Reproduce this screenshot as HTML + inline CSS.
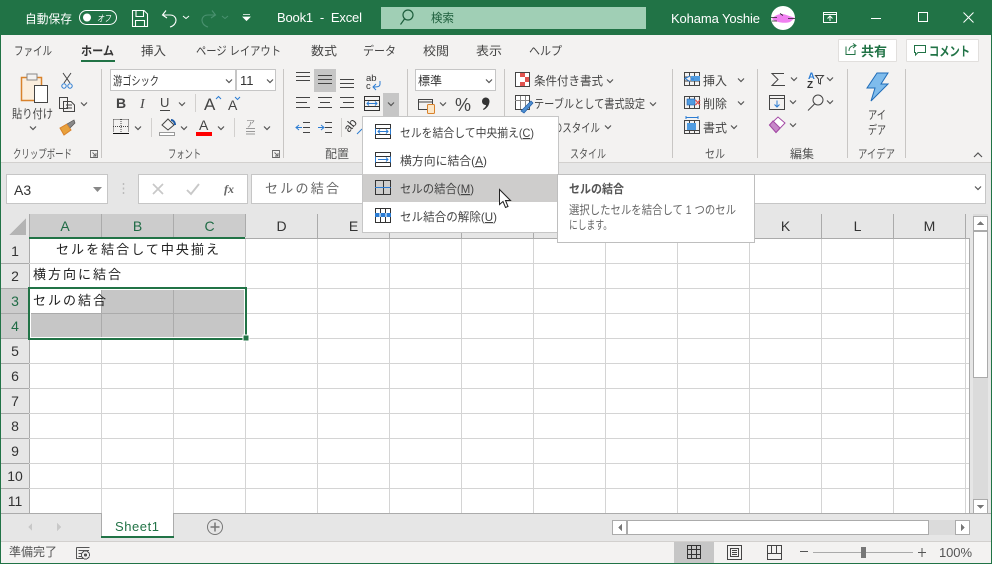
<!DOCTYPE html>
<html><head><meta charset="utf-8"><style>
html,body{margin:0;padding:0;background:#e6e6e6;overflow:hidden}
svg{display:block;font-family:"Liberation Sans","Noto Sans CJK JP",sans-serif;font-size:12px}
text{fill:#444;white-space:pre}
.cr{shape-rendering:crispEdges}
.cell{fill:#222;font-size:13px}
.hd{fill:#333;font-size:14px;text-anchor:middle}
.hs{fill:#1f6b45;font-size:14px;text-anchor:middle}
.rh{fill:#333;font-size:14px;text-anchor:middle}
</style></head><body>
<svg width="992" height="564" viewBox="0 0 992 564" xmlns="http://www.w3.org/2000/svg">
<defs>
<path id="c" d="M-3-1.5L0 1.5L3-1.5" fill="none" stroke="#555" stroke-width="1.2"/>
<path id="al" d="M0 .5H14M0 4.500H14M0 8.500H14" fill="none" stroke="#444" shape-rendering="crispEdges"/>
</defs>

<g class="cr">
<rect width="992" height="564" fill="#e6e6e6"/>
<rect width="992" height="35" fill="#217346"/>
<rect y="35" width="992" height="127" fill="#f3f2f1"/>
<rect y="162" width="992" height="1" fill="#d2d0ce"/>
<rect x="381" y="7" width="265" height="22" fill="#a0cfb5"/>
<rect y="542" width="992" height="21" fill="#f3f2f1"/>
<rect y="541" width="992" height="1" fill="#d2d0ce"/>

<!-- formula bar -->
<rect x="6.500" y="174.500" width="101" height="29" fill="#fff" stroke="#c6c6c6"/>
<rect x="138.500" y="174.500" width="109" height="29" fill="#fff" stroke="#c6c6c6"/>
<rect x="251.500" y="174.500" width="734" height="29" fill="#fff" stroke="#c6c6c6"/>

<!-- grid -->
<rect x="29" y="238" width="940" height="275" fill="#fff"/>
<rect x="29" y="214" width="216" height="24" fill="#cccccc"/>
<rect x="0" y="288" width="29" height="50" fill="#cccccc"/>
<path d="M101.500 214V237M173.500 214V237M245.500 214V237M317.500 214V238M389.500 214V238M461.500 214V238M533.500 214V238M605.500 214V238M677.500 214V238M749.500 214V238M821.500 214V238M893.500 214V238M965.500 214V238M29.500 214V513" stroke="#ababab" fill="none"/>
<path d="M0 263.500H29M0 288.500H29M0 313.500H29M0 338.500H29M0 363.500H29M0 388.500H29M0 413.500H29M0 438.500H29M0 463.500H29M0 488.500H29" stroke="#ababab" fill="none"/>
<path d="M29 263.500H969M29 288.500H969M29 313.500H969M29 338.500H969M29 363.500H969M29 388.500H969M29 413.500H969M29 438.500H969M29 463.500H969M29 488.500H969" stroke="#d4d4d4" fill="none"/>
<path d="M101.500 338V513M173.500 338V513M245.500 238V513M317.500 238V513M389.500 238V513M461.500 238V513M533.500 238V513M605.500 238V513M677.500 238V513M749.500 238V513M821.500 238V513M893.500 238V513M965.500 238V513" stroke="#d4d4d4" fill="none"/>
<path d="M245 238.500H969M969.500 238V513" stroke="#ababab" fill="none"/>
<rect x="29" y="237" width="216" height="2" fill="#217346"/>
<!-- selection -->
<rect x="30" y="289" width="215" height="49" fill="#fff"/>
<rect x="31" y="290" width="213" height="47" fill="#c6c6c6"/>
<rect x="31" y="290" width="70" height="23" fill="#fff"/>
<path d="M101.500 290V337M173.500 290V337M31 313.500H244" stroke="#ababab" fill="none"/>
<rect x="28" y="287" width="219" height="2" fill="#217346"/>
<rect x="28" y="338" width="219" height="2" fill="#217346"/>
<rect x="28" y="287" width="2" height="53" fill="#217346"/>
<rect x="245" y="287" width="2" height="53" fill="#217346"/>
<rect x="243" y="335" width="6" height="6" fill="#217346" stroke="#fff"/>
<polygon points="26,218 26,235 9,235" fill="#b4b4b4"/>

<!-- v scrollbar -->
<rect x="973" y="214" width="15" height="299" fill="#dbdbdb"/>
<rect x="973.500" y="216.500" width="14" height="14" fill="#fff" stroke="#ababab"/>
<rect x="973.500" y="231.500" width="14" height="146" fill="#fff" stroke="#ababab"/>
<rect x="973.500" y="499.500" width="14" height="14" fill="#fff" stroke="#ababab"/>
<polygon points="977,225 984,225 980.500,221" fill="#777"/>
<polygon points="977,505 984,505 980.500,509" fill="#777"/>

<!-- bottom tabs -->
<rect y="513" width="992" height="1" fill="#ababab"/>
<rect x="101" y="513" width="73" height="24" fill="#fff"/>
<rect x="101" y="513" width="1" height="24" fill="#ababab"/>
<rect x="173" y="513" width="1" height="24" fill="#ababab"/>
<rect x="101" y="536" width="73" height="2" fill="#217346"/>
<rect x="612.500" y="520.500" width="14" height="14" fill="#fff" stroke="#ababab"/>
<rect x="627" y="520" width="329" height="15" fill="#dbdbdb"/>
<rect x="627.500" y="520.500" width="301" height="14" fill="#fff" stroke="#ababab"/>
<rect x="955.500" y="520.500" width="14" height="14" fill="#fff" stroke="#ababab"/>
<polygon points="622,524 622,531 618,527.500" fill="#777"/>
<polygon points="961,524 961,531 965,527.500" fill="#777"/>
<polygon points="32,523 32,531 28,527" fill="#c8c8c8"/>
<polygon points="57,523 57,531 61,527" fill="#c8c8c8"/>

<!-- status -->
<rect x="674" y="542" width="40" height="21" fill="#c6c6c6"/>
<path d="M687.500 545.500H700.500V558.500H687.500ZM691.500 545.500V558.500M696.500 545.500V558.500M687.500 549.500H700.500M687.500 554.500H700.500" fill="none" stroke="#333"/>
<path d="M727.500 545.500H741.500V559.500H727.500ZM730.500 548.500H738.500V556.500H730.500ZM732 550.500H737M732 552.500H737M732 554.500H737" fill="none" stroke="#444"/>
<path d="M767.500 545.500H781.500V559.500H767.500ZM767.500 553.500H781.500M771.500 545.500V553.500M776.500 545.500V553.500" fill="none" stroke="#444"/>
<rect x="800" y="551" width="8" height="1" fill="#555"/>
<rect x="813" y="552" width="100" height="1" fill="#aaa"/>
<rect x="861" y="547" width="5" height="11" fill="#777"/>
<path d="M918 552.500H926M922 548V557" stroke="#555" fill="none"/>
<path d="M76.500 547.500H89.500M76.500 547.500V558.500H83M78.500 550.500H89M78.500 553.500H82M78.500 556.500H82" fill="none" stroke="#555"/>
<circle cx="85.500" cy="555" r="4" fill="#f3f2f1" stroke="#555"/>
<circle cx="85.500" cy="555" r="1.500" fill="#555"/>
<rect y="563" width="992" height="1" fill="#217346"/>
<rect x="0" y="35" width="1" height="529" fill="#217346"/>
<rect x="991" y="35" width="1" height="529" fill="#217346"/>

<!-- ribbon separators -->
<path d="M101.500 69V158M283.500 69V158M407.500 69V158M504.500 69V158M672.500 69V158M757.500 69V158M847.500 69V158M905.500 69V158" stroke="#c8c6c4" fill="none"/>
<path d="M195.500 94V112M151.500 118V137M234.500 118V137M341.500 118V137" stroke="#d2d0ce" fill="none"/>

<!-- share / comment -->
<rect x="838.500" y="39.500" width="58" height="22" rx="1" fill="#fff" stroke="#e1dfdd"/>
<rect x="906.500" y="39.500" width="72" height="22" rx="1" fill="#fff" stroke="#e1dfdd"/>

<!-- font boxes -->
<rect x="110.500" y="69.500" width="125" height="21" fill="#fff" stroke="#c6c6c6"/>
<rect x="236.500" y="69.500" width="39" height="21" fill="#fff" stroke="#c6c6c6"/>
<rect x="415.500" y="69.500" width="80" height="21" fill="#fff" stroke="#c6c6c6"/>

<!-- align highlights -->
<rect x="314" y="69" width="22" height="23" fill="#c6c6c6"/>
<rect x="383" y="93" width="16" height="23" fill="#c6c6c6"/>
</g>

<!-- TITLE BAR -->
<text x="25" y="23" style="fill:#fff" textLength="47" lengthAdjust="spacingAndGlyphs">自動保存</text>
<rect x="79.500" y="10.500" width="37" height="14" rx="7" fill="none" stroke="#fff"/>
<circle cx="87" cy="17.500" r="4" fill="#fff"/>
<text x="97" y="21.500" style="fill:#fff;font-size:9px;font-style:italic" textLength="14" lengthAdjust="spacingAndGlyphs">オフ</text>
<g fill="none" stroke="#fff" stroke-width="1.100">
<path d="M132.500 10.500H144L147.500 14V26.500H132.500ZM136 10.500V16.500H143.500V10.500M135.500 26.500V20.500H144.500V26.500"/>
<path d="M166 10.500L162.500 15L167 18M162.500 15H170C178 15 178 25 170 27"/>
</g>
<path d="M183 16l3 2.500 3-2.500" fill="none" stroke="#fff"/>
<path d="M212 10.500L215.500 15L211 18M215.500 15H208C200 15 200 25 208 27" fill="none" stroke="#4a9170" stroke-width="1.100"/>
<path d="M222 16l3 2.500 3-2.500" fill="none" stroke="#4a9170"/>
<path d="M243 14.500H250M243 17l3.500 3.500 3.500-3.500z" fill="#fff" stroke="#fff" stroke-width=".8"/>
<text x="277" y="22" style="fill:#fff;font-size:13px" textLength="85">Book1  -  Excel</text>
<g fill="none" stroke="#1d5e3c" stroke-width="1.200"><circle cx="408" cy="15" r="5"/><path d="M404.500 19L400.500 24.500"/></g>
<text x="431" y="22" style="fill:#1d5e3c" textLength="23" lengthAdjust="spacingAndGlyphs">検索</text>
<text x="671" y="23" style="fill:#fff;font-size:13px" textLength="89">Kohama Yoshie</text>
<circle cx="783" cy="18" r="12" fill="#fff"/>
<path d="M772 19C775 15 780 13 785 14.500L795 18L790 22C785 23.500 777 23 772 19Z" fill="#f080f0"/>
<path d="M771 17.500H777M780 13.500L783 15.500M788 18.500H795M772 21H777" stroke="#222" stroke-width=".8" fill="none"/>
<g fill="none" stroke="#fff">
<path d="M823.500 12.500H836.500V22.500H823.500ZM823.500 14.500H836.500M830 21V16.500M827.500 18.500L830 16L832.500 18.500"/>
<path d="M871 18.500H881"/>
<path d="M918.500 12.500H927.500V21.500H918.500Z"/>
<path d="M963.500 12.500L973.500 22.500M973.500 12.500L963.500 22.500"/>
</g>

<!-- TABS -->
<text x="14" y="55" textLength="38" lengthAdjust="spacingAndGlyphs">ファイル</text>
<text x="81" y="55" style="fill:#333;font-weight:bold" textLength="33" lengthAdjust="spacingAndGlyphs">ホーム</text>
<rect x="81" y="60" width="34" height="2" fill="#217346"/>
<text x="141" y="55" textLength="25" lengthAdjust="spacingAndGlyphs">挿入</text>
<text x="196" y="55" textLength="85" lengthAdjust="spacingAndGlyphs">ページ レイアウト</text>
<text x="311" y="55" textLength="26" lengthAdjust="spacingAndGlyphs">数式</text>
<text x="363" y="55" textLength="33" lengthAdjust="spacingAndGlyphs">データ</text>
<text x="423" y="55" textLength="26" lengthAdjust="spacingAndGlyphs">校閲</text>
<text x="476" y="55" textLength="26" lengthAdjust="spacingAndGlyphs">表示</text>
<text x="529" y="55" textLength="33" lengthAdjust="spacingAndGlyphs">ヘルプ</text>
<path d="M846 46.500V54.500H855V50M849 51C849 47 852 45.500 855 45.500M853 43.500L856 45.500L853 48" fill="none" stroke="#217346"/>
<text x="861" y="56" style="fill:#217346;font-weight:bold;font-size:13px" textLength="26">共有</text>
<path d="M914.500 45.500H925.500V52.500H918L915.500 55V52.500H914.500Z" fill="none" stroke="#217346"/>
<text x="929" y="56" style="fill:#217346;font-weight:bold;font-size:13px" textLength="41" lengthAdjust="spacingAndGlyphs">コメント</text>

<!-- CLIPBOARD -->
<rect x="21.500" y="77.500" width="20" height="23" fill="#fbeedd" stroke="#d9822b" stroke-width="1.500"/>
<rect x="27" y="74" width="10" height="6" fill="#f3f2f1" stroke="#888"/>
<rect x="34.500" y="85.500" width="13" height="17" fill="#fff" stroke="#444"/>
<text x="12" y="118" textLength="41" lengthAdjust="spacingAndGlyphs">貼り付け</text>
<use href="#c" x="33" y="128"/>
<g fill="none" stroke="#444"><path d="M63 73L70 83M71 73L64 83"/></g>
<g fill="none" stroke="#2b7cd3"><circle cx="64" cy="86" r="2.200"/><circle cx="70" cy="86" r="2.200"/></g>
<path d="M59.500 97.500H67.500V108.500H59.500ZM63.500 101.500H71L74.500 105V111.500H63.500ZM66 105H72M66 108H72" fill="#f3f2f1" stroke="#444"/>
<use href="#c" x="84" y="104"/>
<path d="M60 128L67 124L71 130L64 135Z" fill="#e8a13c" stroke="#d9822b"/>
<path d="M67 124L74 120L75 123L70 128" fill="#888" stroke="#555" stroke-width=".7"/>

<!-- FONT -->
<text x="113" y="85" style="fill:#333" textLength="46" lengthAdjust="spacingAndGlyphs">游ゴシック</text>
<use href="#c" x="229" y="81"/>
<text x="240" y="85" style="fill:#333;font-size:13px">11</text>
<use href="#c" x="270" y="81"/>
<text x="116" y="108" style="font-weight:bold;font-size:14px">B</text>
<text x="140" y="108" style="font-style:italic;font-size:14px;font-family:'Liberation Serif',serif">I</text>
<text x="160" y="107" style="font-size:13px">U</text>
<path d="M160 110.500H170" stroke="#444"/>
<use href="#c" x="182" y="104"/>
<text x="204" y="110" style="font-size:17px">A</text>
<path d="M216 99l2.500-2.500 2.500 2.500" fill="none" stroke="#2b7cd3"/>
<text x="228" y="110" style="font-size:14px">A</text>
<path d="M235 97l2.500 2.500 2.500-2.500" fill="none" stroke="#2b7cd3"/>
<g class="cr">
<path d="M113.500 119.500H128.500M113.500 119.500V132M128.500 119.500V132M121 119V132M113 126.500H128" fill="none" stroke="#444" stroke-dasharray="1 1"/>
<rect x="113" y="133" width="16" height="1" fill="#111"/>
</g>
<use href="#c" x="138" y="128"/>
<path d="M162 125L168 119L174 125L168 130Z" fill="none" stroke="#444"/>
<path d="M171 120C173 120 175 122 175 125" stroke="#1f5ca8" stroke-width="2" fill="none"/>
<rect x="159.500" y="132.500" width="15" height="3" fill="#fff" stroke="#999"/>
<use href="#c" x="184" y="128"/>
<text x="199" y="130" style="font-size:14px">A</text>
<rect x="196" y="132" width="16" height="4" fill="#f00"/>
<use href="#c" x="221" y="128"/>
<text x="246" y="127" style="fill:#888;font-size:9px">ア</text>
<path d="M246 128.500H255M246 131.500H255M246 134H255" stroke="#999"/>
<use href="#c" x="267" y="128"/>

<!-- ALIGN -->
<use href="#al" x="296" y="72"/><use href="#al" x="318" y="75"/><use href="#al" x="340" y="79"/>
<g fill="none" stroke="#444" class="cr">
<path d="M296 97.500H310M296 102.500H307M296 107.500H310"/>
<path d="M318 97.500H332M320 102.500H330M318 107.500H332"/>
<path d="M340 97.500H354M343 102.500H354M340 107.500H354"/>
<path d="M303 122.500H310M303 127.500H310M303 132.500H310"/>
<path d="M325 122.500H332M325 127.500H332M325 132.500H332"/>
</g>
<path d="M302 127.500H296M299 125L296 127.500L299 130" fill="none" stroke="#2b7cd3"/>
<path d="M318 127.500H324M321 125L324 127.500L321 130" fill="none" stroke="#2b7cd3"/>
<text x="366" y="81" style="fill:#333;font-size:9.500px">ab</text>
<text x="366" y="89" style="fill:#333;font-size:9.500px">c</text>
<path d="M380 81V84C380 87 377 87 373 87M376 84L373 87L376 90" fill="none" stroke="#2b7cd3"/>
<g class="cr"><path d="M364.500 96.500H379.500V110.500H364.500ZM364.500 100.500H379.500M364.500 106.500H379.500" fill="none" stroke="#333"/></g>
<path d="M367 103.500H377M369 101.500L367 103.500L369 105.500M375 101.500L377 103.500L375 105.500" fill="none" stroke="#2b7cd3"/>
<use href="#c" x="391" y="104"/>
<text x="349" y="133" transform="rotate(-50 349 133)" style="fill:#333;font-size:12px">ab</text>
<path d="M357 134L362 129" stroke="#2b7cd3" fill="none"/>

<!-- NUMBER -->
<text x="418" y="85" style="fill:#333" textLength="24" lengthAdjust="spacingAndGlyphs">標準</text>
<use href="#c" x="489" y="81"/>
<path d="M418.500 99.500H432.500V109.500H418.500ZM418.500 102H432.500" fill="none" stroke="#444"/>
<rect x="427.500" y="104.500" width="7" height="9" rx="1" fill="#fce7c8" stroke="#d9822b"/>
<use href="#c" x="443" y="104"/>
<text x="455" y="111" style="font-size:18px">%</text>
<path d="M482 101.500A3.500 3.500 0 0 1 489.500 101C489.500 105 487 108.500 483.500 110L483 109C485 107.500 486 106.500 486 105A3.500 3.500 0 0 1 482 101.500Z" fill="#333"/>

<!-- STYLES -->
<g class="cr">
<rect x="515.500" y="72.500" width="14" height="14" fill="#fff" stroke="#444"/>
<rect x="520" y="73" width="5" height="4" fill="#e0524e"/><rect x="525" y="77" width="4" height="5" fill="#e0524e"/><rect x="520" y="82" width="5" height="4" fill="#e0524e"/>
<rect x="515.500" y="95.500" width="14" height="14" fill="#fff" stroke="#444"/>
<path d="M515 100.500H529M520.500 96V109M525.500 96V109" stroke="#888" fill="none"/>
</g>
<path d="M521 111L531 101L533 103L524 113Z" fill="#4f8fd0" stroke="#1f5ca8" stroke-width=".7"/>
<text x="534" y="85" textLength="69" lengthAdjust="spacingAndGlyphs">条件付き書式</text>
<use href="#c" x="610" y="81"/>
<text x="534" y="108" textLength="111" lengthAdjust="spacingAndGlyphs">テーブルとして書式設定</text>
<use href="#c" x="653" y="104"/>
<text x="534" y="132" textLength="66" lengthAdjust="spacingAndGlyphs">セルのスタイル</text>
<use href="#c" x="608" y="127"/>

<!-- CELLS -->
<g fill="none" stroke="#444" class="cr">
<path d="M684.500 72.500H699.500V85.500H684.500ZM684.500 77H699.500M684.500 81H699.500M689.500 72.500V85.500M694.500 72.500V85.500"/>
<path d="M684.500 96.500H699.500V108.500H684.500ZM689.500 96.500V108.500M694.500 96.500V108.500"/>
<path d="M684.500 120.500H699.500V133.500H684.500ZM689.500 120.500V133.500M694.500 120.500V133.500M684.500 130.500H699.500"/>
</g>
<rect x="691" y="76" width="9" height="5" fill="#4f9be0"/>
<rect x="686" y="78.500" width="8" height="1" fill="#2b7cd3"/>
<path d="M690 76L685 78.500L690 81.500" fill="#f3f2f1" stroke="#2b7cd3"/>
<rect x="687" y="99" width="8" height="6" fill="#4f9be0" stroke="#1f5ca8" stroke-width=".6"/>
<path d="M695.500 100L700 105M700 100L695.500 105" stroke="#e0524e" stroke-width="1.300"/>
<rect x="687" y="123" width="9" height="7" fill="#4f9be0"/>
<path d="M686 117.500H698M686 116V119M698 116V119" stroke="#2b7cd3" fill="none"/>
<text x="703" y="85" textLength="24">挿入</text>
<use href="#c" x="741" y="80"/>
<text x="703" y="108" textLength="24">削除</text>
<use href="#c" x="741" y="103"/>
<text x="703" y="132" textLength="24">書式</text>
<use href="#c" x="734" y="127"/>

<!-- EDITING -->
<path d="M784 73.500H772L778 79.500L772 85.500H785" fill="none" stroke="#444"/>
<use href="#c" x="794" y="79"/>
<text x="808" y="79" style="fill:#2b7cd3;font-size:9.500px;font-weight:bold">A</text>
<text x="807" y="88" style="fill:#333;font-size:10px;font-weight:bold">Z</text>
<path d="M815.500 75.500H823.500L820.500 79V84L818.500 83V79Z" fill="none" stroke="#444"/>
<use href="#c" x="830" y="79"/>
<path d="M769.500 95.500H784.500V109.500H769.500ZM769.500 98.500H784.500" fill="none" stroke="#444" class="cr"/>
<path d="M777 100.500V107M774.500 104.500L777 107L779.500 104.500" fill="none" stroke="#2b7cd3"/>
<use href="#c" x="793" y="102"/>
<circle cx="818" cy="100" r="5" fill="none" stroke="#444"/>
<path d="M814.500 104L808 110.500" stroke="#444" fill="none"/>
<use href="#c" x="830" y="102"/>
<path d="M769.500 125L778 117L785 123L776 132.500Z" fill="#fff" stroke="#a349a4"/>
<path d="M769.500 125L773 121L780 128L776 132.500Z" fill="#c688c8" stroke="#a349a4"/>
<use href="#c" x="793" y="125"/>

<!-- IDEAS -->
<path d="M877 73H888L881 84H888L871 101L875 88H867Z" fill="#7fbcec" stroke="#1f6cb8"/>
<text x="868" y="119" textLength="18" lengthAdjust="spacingAndGlyphs">アイ</text>
<text x="868" y="134" textLength="18" lengthAdjust="spacingAndGlyphs">デア</text>

<!-- GROUP LABELS -->
<text x="13" y="158" style="fill:#555" textLength="59" lengthAdjust="spacingAndGlyphs">クリップボード</text>
<text x="168" y="158" style="fill:#555" textLength="33" lengthAdjust="spacingAndGlyphs">フォント</text>
<text x="325" y="158" style="fill:#555" textLength="24" lengthAdjust="spacingAndGlyphs">配置</text>
<text x="570" y="158" style="fill:#555" textLength="36" lengthAdjust="spacingAndGlyphs">スタイル</text>
<text x="705" y="158" style="fill:#555" textLength="20" lengthAdjust="spacingAndGlyphs">セル</text>
<text x="790" y="158" style="fill:#555" textLength="24" lengthAdjust="spacingAndGlyphs">編集</text>
<text x="858" y="158" style="fill:#555" textLength="37" lengthAdjust="spacingAndGlyphs">アイデア</text>
<path d="M90.500 150.500V157.500H97.500V150.500ZM92.500 152.500L96 156M96 153V156H93M272.500 150.500V157.500H279.500V150.500ZM274.500 152.500L278 156M278 153V156H275" fill="none" stroke="#666" stroke-width=".9"/>
<path d="M974 157l4-4 4 4" fill="none" stroke="#555" stroke-width="1.200"/>

<!-- FORMULA BAR CONTENT -->
<text x="14" y="195" style="fill:#333;font-size:14px">A3</text>
<polygon points="93,187 102,187 97.500,192" fill="#888"/>
<path d="M123.500 183V185M123.500 187.500V189.500M123.500 192V194" stroke="#bbb" stroke-width="1.500"/>
<path d="M153 184L163 194M163 184L153 194" stroke="#c8c8c8" stroke-width="1.700" fill="none"/>
<path d="M187 190L191 194L199 184" stroke="#c8c8c8" stroke-width="1.900" fill="none"/>
<text x="224" y="193" style="fill:#666;font-size:12px;font-style:italic;font-weight:bold;font-family:'Liberation Serif',serif">fx</text>
<text x="265" y="193" style="fill:#666;font-size:13px" textLength="74">セルの結合</text>
<use href="#c" x="978" y="188"/>

<!-- HEADERS -->
<g>
<text class="hs" x="65" y="231">A</text><text class="hs" x="137.500" y="231">B</text><text class="hs" x="209.500" y="231">C</text>
<text class="hd" x="281.500" y="231">D</text><text class="hd" x="353.500" y="231">E</text>
<text class="hd" x="785.500" y="231">K</text><text class="hd" x="857.500" y="231">L</text><text class="hd" x="929.500" y="231">M</text>
<text class="rh" x="15" y="256">1</text><text class="rh" x="15" y="281">2</text>
<text class="hs" x="15" y="306">3</text><text class="hs" x="15" y="331">4</text>
<text class="rh" x="15" y="356">5</text><text class="rh" x="15" y="381">6</text><text class="rh" x="15" y="406">7</text><text class="rh" x="15" y="431">8</text><text class="rh" x="15" y="456">9</text><text class="rh" x="15" y="481">10</text><text class="rh" x="15" y="506">11</text>
</g>

<!-- CELLS CONTENT -->
<text class="cell" x="56" y="254" textLength="163">セルを結合して中央揃え</text>
<text class="cell" x="33" y="279" textLength="88">横方向に結合</text>
<text class="cell" x="33" y="305" textLength="73">セルの結合</text>

<!-- TABS BOTTOM -->
<text x="115" y="531" style="fill:#217346;font-size:13px" textLength="44">Sheet1</text>
<circle cx="215" cy="527" r="7.500" fill="none" stroke="#777"/>
<path d="M210.500 527H219.500M215 522.500V531.500" stroke="#777" stroke-width="1.500"/>
<text x="9" y="556" style="fill:#555" textLength="48" lengthAdjust="spacingAndGlyphs">準備完了</text>
<text x="939" y="557" style="fill:#555;font-size:13px" textLength="33">100%</text>

<!-- MENU -->
<g class="cr">
<rect x="362.500" y="116.500" width="196" height="116" fill="#fff" stroke="#c6c6c6"/>
<rect x="363" y="174" width="194" height="28" fill="#cecdcc"/>
<g fill="none" stroke="#333">
<path d="M375.500 124.500H390.500V138.500H375.500ZM375.500 128.500H390.500M375.500 134.500H390.500"/>
<path d="M375.500 152.500H390.500V166.500H375.500ZM375.500 156.500H390.500M375.500 162.500H390.500"/>
<path d="M375.500 180.500H390.500V194.500H375.500ZM383.500 180.500V194.500"/>
<path d="M375.500 208.500H390.500V222.500H375.500ZM380.500 208.500V222.500M385.500 208.500V222.500"/>
</g>
<rect x="376" y="129" width="14" height="5" fill="#fff"/>
<rect x="376" y="157" width="14" height="5" fill="#fff"/>
<rect x="375" y="187" width="16" height="1" fill="#2b7cd3"/>
<rect x="375" y="213" width="16" height="4" fill="#2b7cd3"/>
<path d="M380 213V217M386 213V217" stroke="#fff"/>
</g>
<path d="M375.500 128.500V134.500M390.500 128.500V134.500M375.500 156.500V162.500M390.500 156.500V162.500" stroke="#2b7cd3"/>
<path d="M378 131.500H388M380 129.500L378 131.500L380 133.500M386 129.500L388 131.500L386 133.500" fill="none" stroke="#2b7cd3"/>
<path d="M378 159.500H388M386 157.500L388 159.500L386 161.500" fill="none" stroke="#2b7cd3"/>
<text x="400" y="137" textLength="134" lengthAdjust="spacingAndGlyphs">セルを結合して中央揃え(<tspan text-decoration="underline">C</tspan>)</text>
<text x="400" y="165" textLength="87" lengthAdjust="spacingAndGlyphs">横方向に結合(<tspan text-decoration="underline">A</tspan>)</text>
<text x="400" y="193" textLength="74" lengthAdjust="spacingAndGlyphs">セルの結合(<tspan text-decoration="underline">M</tspan>)</text>
<text x="400" y="221" textLength="97" lengthAdjust="spacingAndGlyphs">セル結合の解除(<tspan text-decoration="underline">U</tspan>)</text>

<!-- TOOLTIP -->
<rect x="557.500" y="174.500" width="197" height="68" fill="#fff" stroke="#bebebe" class="cr"/>
<text x="569" y="193" style="fill:#555;font-weight:bold" textLength="55" lengthAdjust="spacingAndGlyphs">セルの結合</text>
<text x="569" y="214" style="fill:#666" textLength="167" lengthAdjust="spacingAndGlyphs">選択したセルを結合して 1 つのセル</text>
<text x="569" y="229" style="fill:#666" textLength="43" lengthAdjust="spacingAndGlyphs">にします。</text>

<!-- CURSOR -->
<path d="M499.500 189.500V204.500L503 201.500L505.500 207.500L508 206.500L505.500 200.500L510.500 200.500Z" fill="#fff" stroke="#222"/>
</svg>
</body></html>
